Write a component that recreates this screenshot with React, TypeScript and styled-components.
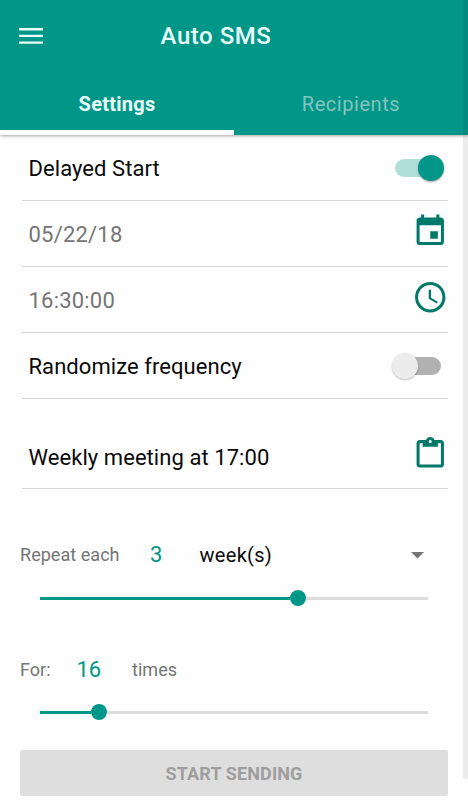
import React from "react";
import styled, { createGlobalStyle } from "styled-components";

const teal = "#009688";
const darkTeal = "#00796b";

const GlobalStyle = createGlobalStyle`
  * { box-sizing: border-box; }
  html, body { margin: 0; background: #fefefe; overflow: hidden; }
  body { font-family: Roboto, "Liberation Sans", sans-serif; }
`;

const Screen = styled.div`
  position: relative;
  width: 468px;
  height: 800px;
  display: flex;
  flex-direction: column;
  background: #fefefe;
`;

const EdgeShade = styled.div`
  position: absolute;
  top: 0;
  right: 0;
  width: 5px;
  height: 779px;
  background: rgba(0, 0, 0, 0.07);
`;

const Header = styled.header`
  height: 135px;
  flex: none;
  display: flex;
  flex-direction: column;
  background: ${teal};
  box-shadow: 0 1px 3px rgba(0, 0, 0, 0.35);
`;

const TitleBar = styled.div`
  height: 73px;
  display: grid;
  grid-template-columns: 62px 1fr 62px;
  align-items: center;
`;

const MenuButton = styled.button`
  display: flex;
  padding: 0 0 0 19px;
  border: 0;
  background: none;
`;

const Title = styled.h1`
  margin: 0 0 2px 0;
  padding-right: 36px;
  text-align: center;
  color: #e9fffc;
  font-size: 24px;
  line-height: 28px;
  font-weight: 500;
  letter-spacing: 0.55px;
`;

const Tabs = styled.nav`
  flex: 1;
  display: grid;
  grid-template-columns: 1fr 1fr;
`;

const Tab = styled.button<{ $active?: boolean }>`
  padding: 5px 0 0;
  border: 0;
  border-bottom: 5px solid ${(p) => (p.$active ? "#fff" : "transparent")};
  background: none;
  color: ${(p) => (p.$active ? "#e9fffc" : "#84c4bd")};
  font-family: inherit;
  font-size: 20px;
  line-height: 24px;
  font-weight: ${(p) => (p.$active ? 700 : 400)};
  letter-spacing: ${(p) => (p.$active ? "0.25px" : "0.55px")};
`;

const Content = styled.main`
  flex: 1;
  display: flex;
  flex-direction: column;
`;

const Row = styled.div<{ $tall?: boolean }>`
  height: ${(p) => (p.$tall ? 90 : 66)}px;
  margin: 0 20px 0 22px;
  padding: ${(p) => (p.$tall ? "26px" : "0")} 0 0 6.5px;
  display: flex;
  align-items: center;
  justify-content: space-between;
  border-bottom: 1px solid #d6d6d6;
`;

const RowLabel = styled.span<{ $muted?: boolean }>`
  padding-top: 2px;
  color: ${(p) => (p.$muted ? "#757575" : "#0a0a0a")};
  font-size: 22px;
  line-height: 26px;
  letter-spacing: ${(p) => (p.$muted ? 0.2 : 0.06)}px;
`;

const IconBox = styled.span<{ $lift?: number }>`
  display: flex;
  padding-bottom: ${(p) => p.$lift ?? 0}px;
  color: ${darkTeal};
`;

const SwitchTrack = styled.button<{ $on?: boolean }>`
  width: 46px;
  height: 18px;
  margin-right: 7px;
  padding: 0;
  border: 0;
  border-radius: 9px;
  display: flex;
  align-items: center;
  justify-content: ${(p) => (p.$on ? "flex-end" : "flex-start")};
  background: ${(p) => (p.$on ? "#b0dfda" : "#b1b1b1")};
`;

const SwitchThumb = styled.span<{ $on?: boolean }>`
  flex: none;
  width: 26px;
  height: 26px;
  margin: 0 -3px;
  border-radius: 50%;
  background: ${(p) => (p.$on ? teal : "#ececec")};
  box-shadow: 0 1px 2px rgba(0, 0, 0, ${(p) => (p.$on ? 0.35 : 0.25)});
`;

const Field = styled.div<{ $top: number }>`
  margin: ${(p) => p.$top}px 20px 0;
  height: 30px;
  display: flex;
  align-items: center;
`;

const Caption = styled.span<{ $width?: number }>`
  width: ${(p) => (p.$width ? `${p.$width}px` : "auto")};
  color: #757575;
  font-size: 18px;
  line-height: 30px;
  letter-spacing: 0.04px;
  white-space: nowrap;
`;

const Amount = styled.span<{ $width: number }>`
  width: ${(p) => p.$width}px;
  color: ${teal};
  font-size: 22px;
  line-height: 30px;
`;

const UnitSelect = styled.button`
  flex: 1;
  padding: 0 24px 0 0;
  border: 0;
  display: flex;
  align-items: center;
  justify-content: space-between;
  background: none;
  color: #0a0a0a;
  font-family: inherit;
  font-size: 20px;
  line-height: 30px;
  letter-spacing: 0.3px;
`;

const Slider = styled.div<{ $top: number }>`
  height: 16px;
  margin: ${(p) => p.$top}px 40px 0;
  display: flex;
  align-items: center;
`;

const Filled = styled.div<{ $percent: number }>`
  width: calc(${(p) => p.$percent}% - 8px);
  height: 3px;
  background: ${teal};
`;

const Knob = styled.div`
  width: 16px;
  height: 16px;
  border-radius: 50%;
  background: ${teal};
`;

const Remaining = styled.div`
  flex: 1;
  height: 3px;
  background: #dcdcdc;
`;

const StartButton = styled.button`
  height: 46px;
  margin: 30px 20px 0;
  padding: 1px 0 0;
  border: 0;
  border-radius: 2px;
  background: #dedede;
  color: #9e9e9e;
  font-family: inherit;
  font-size: 18px;
  font-weight: 700;
  letter-spacing: 0.12px;
`;

const Icon = ({ d }: { d: string }) => (
  <svg width="36.5" height="36.5" viewBox="0 0 24 24" fill="currentColor" fillRule="evenodd">
    <path d={d} />
  </svg>
);

const calendarPath =
  "M17 12h-5v5h5v-5zM16 1v2H8V1H6v2H5c-1.11 0-1.99.9-1.99 2L3 19c0 1.1.89 2 2 2h14c1.1 0 2-.9 2-2V5c0-1.1-.9-2-2-2h-1V1h-2zm3 18H5V8h14v11z";
const clockPath =
  "M11.99 2C6.47 2 2 6.48 2 12s4.47 10 9.99 10C17.52 22 22 17.52 22 12S17.52 2 11.99 2zM12 20c-4.42 0-8-3.58-8-8s3.58-8 8-8 8 3.58 8 8-3.58 8-8 8zM12.5 7H11v6l5.25 3.15.75-1.23-4.5-2.67z";
const clipboardPath =
  "M19 4h-4.18C14.4 2.84 13.3 2 12 2s-2.4.84-2.82 2H5c-1.1 0-2 .9-2 2v14c0 1.1.9 2 2 2h14c1.1 0 2-.9 2-2V6c0-1.1-.9-2-2-2zm-7 0a1 1 0 1 1 0 2 1 1 0 0 1 0-2zm7 16H5V6h2v2.4h10V6h2v14z";

const Switch = ({ on }: { on?: boolean }) => (
  <SwitchTrack $on={on} role="switch" aria-checked={!!on}>
    <SwitchThumb $on={on} />
  </SwitchTrack>
);

const Range = ({ percent, top }: { percent: number; top: number }) => (
  <Slider $top={top}>
    <Filled $percent={percent} />
    <Knob />
    <Remaining />
  </Slider>
);

export default function App() {
  return (
    <>
      <GlobalStyle />
      <Screen>
        <Header>
          <TitleBar>
            <MenuButton aria-label="Menu">
              <svg width="24" height="17" viewBox="0 0 24 17" fill="#e9fffc">
                <path d="M0 0h24v2.4H0zM0 6.7h24v2.4H0zM0 13.4h24v2.4H0z" />
              </svg>
            </MenuButton>
            <Title>Auto SMS</Title>
          </TitleBar>
          <Tabs>
            <Tab $active>Settings</Tab>
            <Tab>Recipients</Tab>
          </Tabs>
        </Header>
        <Content>
          <Row>
            <RowLabel>Delayed Start</RowLabel>
            <Switch on />
          </Row>
          <Row>
            <RowLabel $muted>05/22/18</RowLabel>
            <IconBox $lift={4}><Icon d={calendarPath} /></IconBox>
          </Row>
          <Row>
            <RowLabel $muted>16:30:00</RowLabel>
            <IconBox $lift={5}><Icon d={clockPath} /></IconBox>
          </Row>
          <Row>
            <RowLabel>Randomize frequency</RowLabel>
            <Switch />
          </Row>
          <Row $tall>
            <RowLabel>Weekly meeting at 17:00</RowLabel>
            <IconBox $lift={8}><Icon d={clipboardPath} /></IconBox>
          </Row>
          <Field $top={51}>
            <Caption $width={130}>Repeat each</Caption>
            <Amount $width={49.5}>3</Amount>
            <UnitSelect>
              week(s)
              <svg width="13" height="7" viewBox="0 0 13 7" fill="#757575">
                <path d="M0 0h13L6.5 6.5z" />
              </svg>
            </UnitSelect>
          </Field>
          <Range percent={66.6} top={20} />
          <Field $top={49}>
            <Caption $width={56.5}>For:</Caption>
            <Amount $width={55.5}>16</Amount>
            <Caption>times</Caption>
          </Field>
          <Range percent={15.1} top={19} />
          <StartButton>START SENDING</StartButton>
        </Content>
        <EdgeShade />
      </Screen>
    </>
  );
}
